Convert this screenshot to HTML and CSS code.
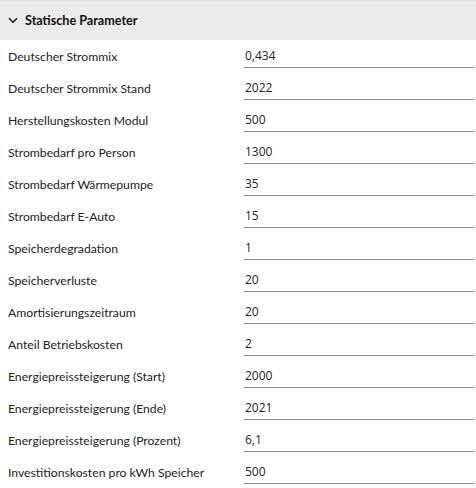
FILE: index.html
```html
<!DOCTYPE html>
<html lang="de">
<head>
<meta charset="utf-8">
<link rel="stylesheet" href="styles.css">
</head>
<body>
<section class="panel">
  <div class="panel-header">
    <svg class="chevron" width="10" height="7" viewBox="0 0 10 7"><path d="M1 1.2 L5 5.2 L9 1.2" fill="none" stroke="#1a1a1a" stroke-width="1.6"/></svg>
    <span class="panel-title">Statische Parameter</span>
  </div>
  <div class="rows">
    <div class="row"><label class="label">Deutscher Strommix</label><div class="field">0,434</div></div>
    <div class="row"><label class="label">Deutscher Strommix Stand</label><div class="field">2022</div></div>
    <div class="row"><label class="label">Herstellungskosten Modul</label><div class="field">500</div></div>
    <div class="row"><label class="label">Strombedarf pro Person</label><div class="field">1300</div></div>
    <div class="row"><label class="label">Strombedarf Wärmepumpe</label><div class="field">35</div></div>
    <div class="row"><label class="label">Strombedarf E-Auto</label><div class="field">15</div></div>
    <div class="row"><label class="label">Speicherdegradation</label><div class="field">1</div></div>
    <div class="row"><label class="label">Speicherverluste</label><div class="field">20</div></div>
    <div class="row"><label class="label">Amortisierungszeitraum</label><div class="field">20</div></div>
    <div class="row"><label class="label">Anteil Betriebskosten</label><div class="field">2</div></div>
    <div class="row"><label class="label">Energiepreissteigerung (Start)</label><div class="field">2000</div></div>
    <div class="row"><label class="label">Energiepreissteigerung (Ende)</label><div class="field">2021</div></div>
    <div class="row"><label class="label">Energiepreissteigerung (Prozent)</label><div class="field">6,1</div></div>
    <div class="row"><label class="label">Investitionskosten pro kWh Speicher</label><div class="field">500</div></div>
  </div>
</section>
</body>
</html>
```
FILE: styles.css
```css
html, body {
  margin: 0;
  padding: 0;
  background: #ffffff;
}
body {
  font-family: "Lato", "Open Sans", sans-serif;
  color: #1f1f1f;
}
.panel-header {
  height: 40px;
  box-sizing: border-box;
  border-top: 1px solid #dcdcdc;
  background: #ebebeb;
  display: flex;
  align-items: center;
  padding-left: 8px;
  gap: 7px;
}
.chevron {
  display: block;
}
.panel-title {
  font-weight: 700;
  font-size: 12.6px;
  color: #111;
}
.row {
  display: grid;
  grid-template-columns: 236px 230px;
  padding-left: 8px;
  height: 32px;
  align-items: center;
}
.label {
  font-size: 12.2px;
  color: #222;
}
.field {
  font-family: "Open Sans", sans-serif;
  font-size: 12px;
  color: #222;
  height: 24px;
  line-height: 24px;
  box-sizing: border-box;
  border-bottom: 1px solid #8a8a8a;
  padding-left: 1px;
}
```
